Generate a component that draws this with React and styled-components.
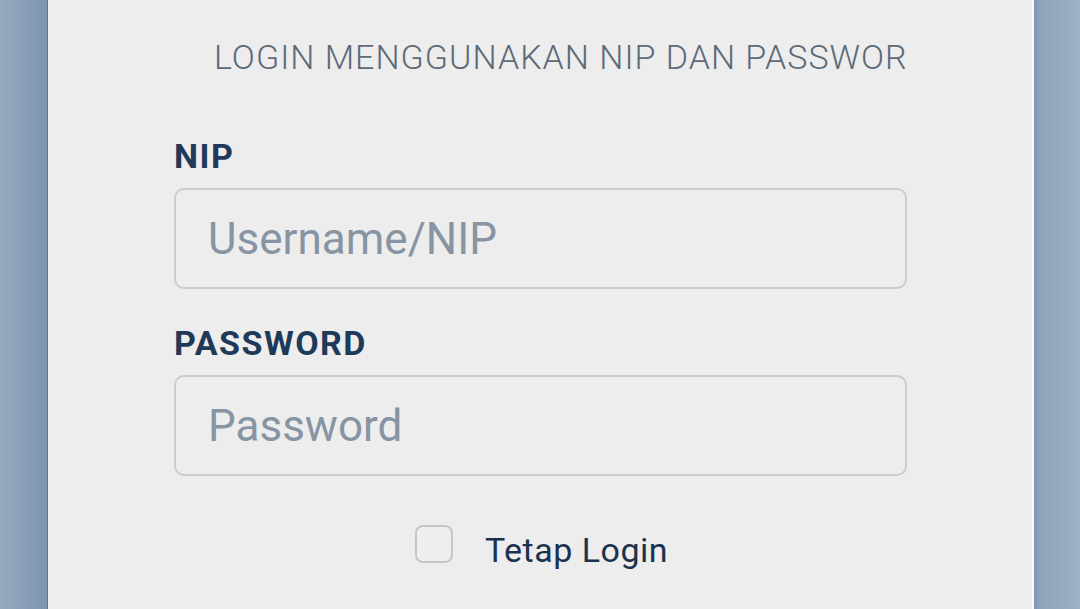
import React, { useState } from 'react';
import styled, { createGlobalStyle } from 'styled-components';

const GlobalStyle = createGlobalStyle`
  html, body {
    margin: 0;
    padding: 0;
    height: 100%;
    overflow: hidden;
  }
  body {
    font-family: Roboto, "Noto Sans", sans-serif;
    background: #9aaec4;
  }
`;

const Page = styled.div`
  display: flex;
  width: 1080px;
  height: 609px;
  background: linear-gradient(90deg, #96aac1 0px, #7d95ae 47px, #7d95ae 1034px, #8ea4bb 1040px, #9db0c6 1080px);
`;

const Side = styled.div`
  width: ${(p) => p.$w}px;
  flex-shrink: 0;
`;

const Card = styled.div`
  width: 987px;
  flex-shrink: 0;
  background: #ededed;
  border-left: 1px solid #5f7690;
  border-right: 2px solid #f6f8fa;
  box-sizing: border-box;
  padding: 0 0 0 126px;
`;

const Form = styled.form`
  display: flex;
  flex-direction: column;
  width: 733px;
`;

const Title = styled.h2`
  margin: 0;
  padding: 37px 0 0 40px;
  font-family: Roboto, sans-serif;
  font-weight: 300;
  font-size: 34px;
  line-height: 40px;
  color: #5d6a78;
  white-space: nowrap;
  letter-spacing: 1px;
`;

const Label = styled.label`
  display: block;
  margin-top: ${(p) => p.$top}px;
  font-family: Roboto, sans-serif;
  font-weight: 700;
  font-size: 34px;
  line-height: 40px;
  color: #1f3a58;
  letter-spacing: 1.5px;
`;

const Input = styled.input`
  box-sizing: border-box;
  width: 733px;
  height: 101px;
  margin-top: ${(p) => p.$top}px;
  padding: 0 0 0 32px;
  border: 2px solid #cacccf;
  border-radius: 10px;
  background: #ededed;
  font-family: Roboto, sans-serif;
  font-size: 44px;
  color: #1f3a58;
  outline: none;
  &::placeholder {
    color: #8794a3;
  }
`;

const CheckRow = styled.div`
  display: flex;
  align-items: center;
  justify-content: center;
  gap: 32px;
  margin-top: 42px;
  padding-left: 2px;
`;

const Box = styled.span`
  box-sizing: border-box;
  width: 38px;
  height: 38px;
  border: 2px solid #c4c6ca;
  border-radius: 8px;
  background: ${(p) => (p.$on ? '#1f3a58' : '#eeeeee')};
  cursor: pointer;
`;

const CheckText = styled.span`
  padding-top: 12px;
  font-family: Roboto, sans-serif;
  font-size: 34px;
  color: #1b324f;
  letter-spacing: 0.5px;
`;

export default function App() {
  const [nip, setNip] = useState('');
  const [pass, setPass] = useState('');
  const [keep, setKeep] = useState(false);

  return (
    <>
      <GlobalStyle />
      <Page>
        <Side $w={47} />
        <Card>
          <Form onSubmit={(e) => e.preventDefault()}>
            <Title>LOGIN MENGGUNAKAN NIP DAN PASSWOR</Title>
            <Label $top={59}>NIP</Label>
            <Input
              $top={12}
              placeholder="Username/NIP"
              value={nip}
              onChange={(e) => setNip(e.target.value)}
            />
            <Label $top={34}>PASSWORD</Label>
            <Input
              $top={12}
              type="password"
              placeholder="Password"
              value={pass}
              onChange={(e) => setPass(e.target.value)}
            />
            <CheckRow>
              <Box $on={keep} onClick={() => setKeep(!keep)} />
              <CheckText>Tetap Login</CheckText>
            </CheckRow>
          </Form>
        </Card>
        <Side $w={46} />
      </Page>
    </>
  );
}
